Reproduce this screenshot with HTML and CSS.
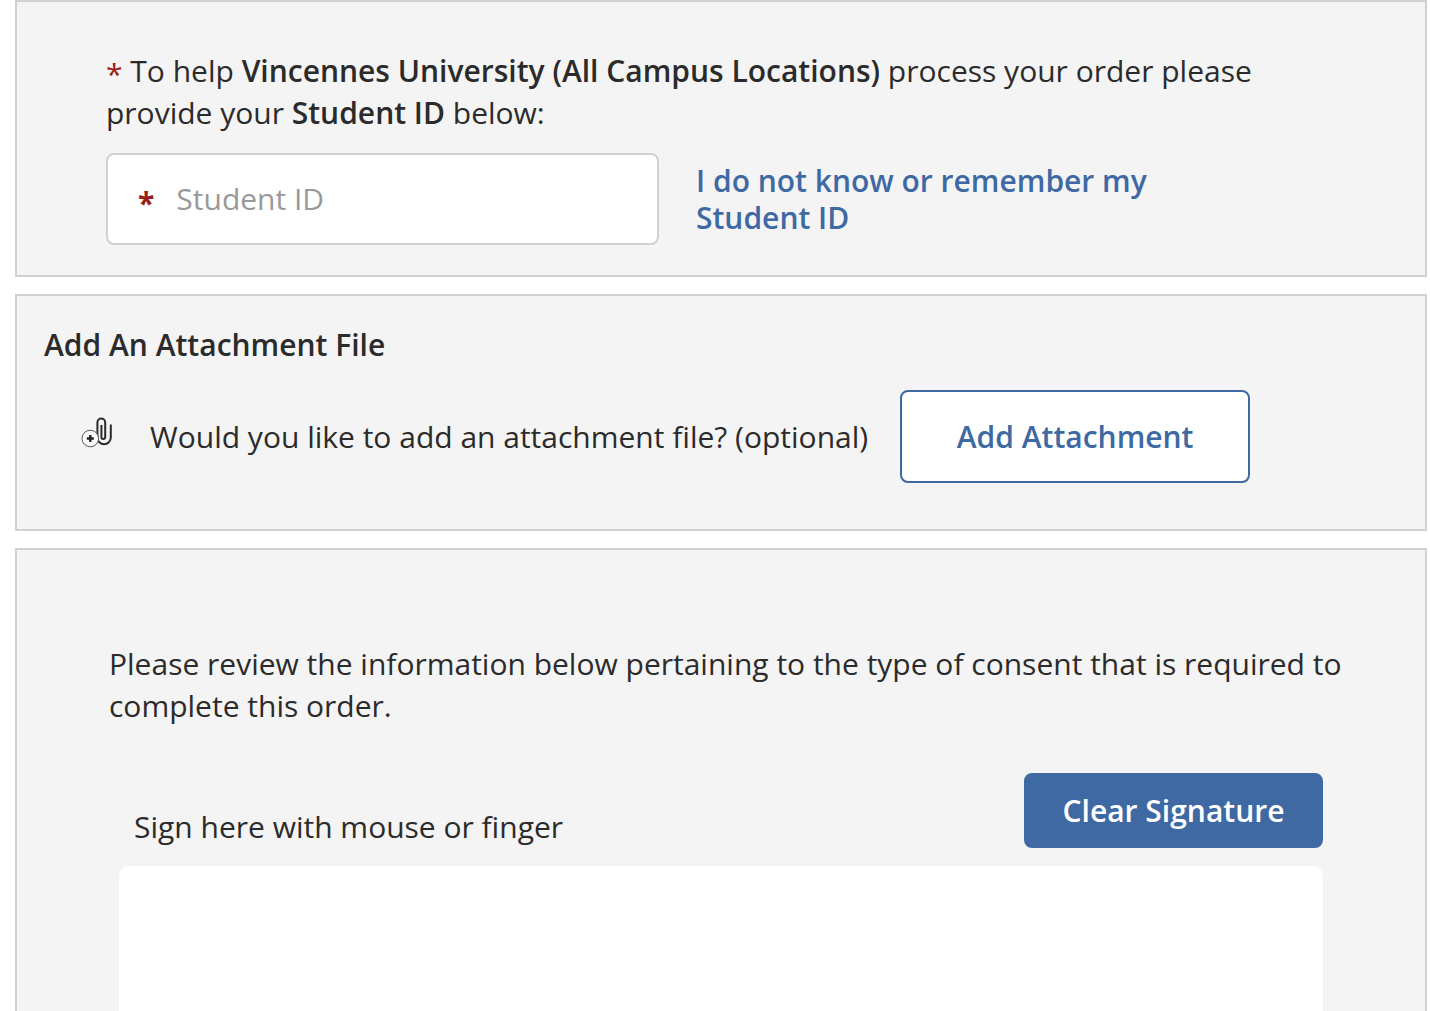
FILE: index.html
```html
<!DOCTYPE html>
<html lang="en">
<head>
<meta charset="utf-8">
<title>Place Order</title>
<meta name="viewport" content="width=device-width, initial-scale=1.0">
<link rel="stylesheet" href="styles.css">
</head>
<body>

<main class="order">

<section class="panel student">
<p class="intro"><span class="required">*</span> To help <strong>Vincennes University (All Campus Locations)</strong> process your order please provide your <strong>Student ID</strong> below:</p>
<div class="student-row">
<label class="field">
<span class="required bold">*</span>
<input type="text" name="studentid" placeholder="Student ID" aria-label="Student ID">
</label>
<a class="unknown" href="#">I do not know or remember my Student ID</a>
</div>
</section>

<section class="panel attachment">
<h2>Add An Attachment File</h2>
<div class="attachment-row">
<svg class="clip" viewBox="0 0 32 40" aria-hidden="true">
<path d="M20.400 8V20a1.900 1.900 0 0 0 3.800 0V5.500a3.900 3.900 0 0 0-7.800 0V20.500a6.700 6.700 0 0 0 13.400 0V7.500" fill="none" stroke="#2b2b2b" stroke-width="2"/>
<circle cx="9.300" cy="21.500" r="8.300" fill="#fafafa" stroke="#555" stroke-width="1"/>
<path d="M9.300 18v7M5.800 21.500h7" stroke="#222" stroke-width="2.400"/>
</svg>
<p>Would you like to add an attachment file? (optional)</p>
<button type="button" class="outline">Add Attachment</button>
</div>
</section>

<section class="panel consent">
<p>Please review the information below pertaining to the type of consent that is required to complete this order.</p>
<div class="sign-row">
<span id="signlabel">Sign here with mouse or finger</span>
<button type="button" class="solid">Clear Signature</button>
</div>
<div class="sign-pad" role="img" aria-labelledby="signlabel"></div>
</section>

</main>

</body>
</html>
```
FILE: styles.css
```css
* {
   box-sizing: border-box;}

body {
   background-color: #fff;
   color: #2b2b2b;
   font-family: 'Open Sans', sans-serif;
   font-size: 30px;
   line-height: 42px;
   margin: 0;}

h2, p {
   margin: 0;}

h2 {
   font-size: 30px;
   font-weight: 600;}

strong {
   font-weight: 600;}

a {
   color: #3e69a3;
   text-decoration: none;}

button {
   border: 2px solid #3e69a3;
   border-radius: 8px;
   cursor: pointer;
   font: inherit;
   font-weight: 600;}

.order {
   display: flex;
   flex-direction: column;
   gap: 17px;
   min-height: 100vh;
   padding: 0 3px 0 15px;}

.panel {
   background-color: #f4f4f4;
   border: 2px solid #d1d1d1;}

.required {
   color: #9b1c14;
   line-height: 30px;
   vertical-align: middle;}

.bold {
   font-weight: 700;
   padding-top: 8px;}

/* student id */
.student {
   padding: 48px 89px 30px;}

.student-row {
   align-items: center;
   display: flex;
   gap: 37px;
   margin-top: 19px;}

.field {
   align-items: center;
   background-color: #fff;
   border: 2px solid #d1d1d1;
   border-radius: 8px;
   display: flex;
   flex: 0 1 553px;
   gap: 22px;
   height: 92px;
   padding: 0 30px;}

.field input {
   background: none;
   border: none;
   color: inherit;
   flex: 1;
   font: inherit;
   min-width: 0;
   outline: none;
   padding: 0;}

.field input::placeholder {
   color: #999;
   opacity: 1;}

.unknown {
   font-weight: 600;
   line-height: 37px;
   max-width: 480px;}

/* attachment */
.attachment {
   padding: 28px 27px 46px;}

.attachment-row {
   align-items: center;
   display: flex;
   gap: 32px;
   margin-top: 24px;
   padding-left: 37px;}

.clip {
   flex: none;
   height: 40px;
   margin-right: 5px;
   width: 32px;}

.outline {
   background-color: #fff;
   color: #3e69a3;
   height: 93px;
   width: 350px;}

/* consent and signature */
.consent {
   border-bottom: none;
   display: flex;
   flex: 1;
   flex-direction: column;
   padding: 93px 72px 0 92px;}

.sign-row {
   align-items: flex-end;
   display: flex;
   justify-content: space-between;
   margin-top: 46px;
   padding-left: 25px;
   padding-right: 30px;}

.solid {
   background-color: #3e69a3;
   color: #fff;
   height: 75px;
   width: 299px;}

.sign-pad {
   background-color: #fff;
   border-radius: 10px 10px 0 0;
   flex: 1;
   margin: 18px 30px 0 10px;
   min-height: 144px;}

@media (max-width:900px) {
   .student-row, .attachment-row, .sign-row {
      align-items: flex-start;
      flex-direction: column;}

   .field {
      flex: none;
      width: 100%;}
}
```
